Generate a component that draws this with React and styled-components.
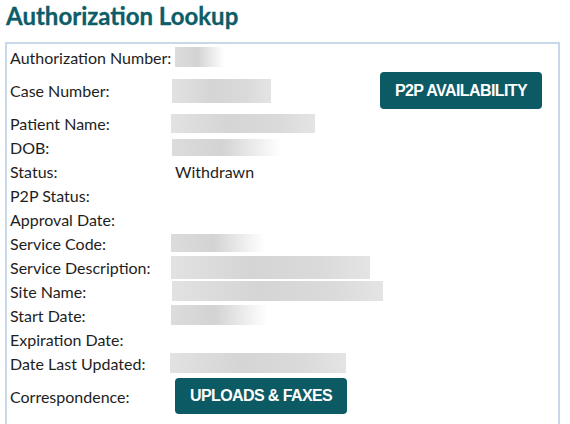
import React from "react";
import styled, { createGlobalStyle } from "styled-components";

const GlobalStyle = createGlobalStyle`
  body {
    margin: 0;
    background: #ffffff;
    font-family: Lato, "Open Sans", sans-serif;
  }
`;

const Page = styled.div`
  padding: 0 10px 0 5px;
`;

const Title = styled.h2`
  margin: 0;
  padding: 1px 0 0 1px;
  height: 41px;
  line-height: 30px;
  font-size: 24px;
  font-weight: 700;
  color: #0d5d68;
  -webkit-text-stroke: 0.3px #0d5d68;
`;

const Panel = styled.div`
  border: 2px solid #c9d8e9;
  padding: 1px 16px 30px 3px;
`;

const Row = styled.div`
  display: grid;
  grid-template-columns: 165px 1fr auto;
  align-items: center;
  min-height: 24px;
  padding: ${(p) => (p.$tall ? "3px 0 2px" : "0")};
`;

const Label = styled.span`
  font-size: 16px;
  color: #1e1e1e;
`;

const Value = styled.span`
  font-size: 16px;
  color: #1e1e1e;
`;

const Blur = styled.div`
  width: ${(p) => p.$w}px;
  height: ${(p) => p.$h || 20}px;
  margin-left: ${(p) => p.$dx || 0}px;
  background: ${(p) =>
    p.$fade
      ? "linear-gradient(90deg, #dcdcdc 0%, #d3d3d3 45%, #f4f4f4 85%, #ffffff 100%)"
      : "linear-gradient(90deg, #e2e2e2 0%, #d5d5d5 40%, #dadada 75%, #e4e4e4 100%)"};
`;

const Button = styled.button`
  height: ${(p) => p.$h || 36}px;
  padding: 0 15px;
  border: none;
  border-radius: 4px;
  background: #0c5a64;
  color: #ffffff;
  font-family: "Liberation Sans", Arial, sans-serif;
  font-size: 16px;
  font-weight: 700;
  letter-spacing: -0.6px;
  text-transform: uppercase;
  justify-self: ${(p) => (p.$end ? "end" : "start")};
`;

const rows = [
  { label: "Authorization Number:", blur: { w: 50, fade: true } },
  { label: "Case Number:", blur: { w: 99, h: 24, dx: -3 }, p2p: true },
  { label: "Patient Name:", blur: { w: 144, h: 19, dx: -4 } },
  { label: "DOB:", blur: { w: 110, h: 17, dx: -3, fade: true } },
  { label: "Status:", text: "Withdrawn" },
  { label: "P2P Status:" },
  { label: "Approval Date:" },
  { label: "Service Code:", blur: { w: 94, h: 18, dx: -4, fade: true } },
  { label: "Service Description:", blur: { w: 199, h: 23, dx: -4 } },
  { label: "Site Name:", blur: { w: 211, h: 20, dx: -3 } },
  { label: "Start Date:", blur: { w: 97, h: 20, dx: -4, fade: true } },
  { label: "Expiration Date:" },
  { label: "Date Last Updated:", blur: { w: 176, h: 20, dx: -5 } },
];

export default function App() {
  return (
    <Page>
      <GlobalStyle />
      <Title>Authorization Lookup</Title>
      <Panel>
        {rows.map((r) => (
          <Row key={r.label} $tall={r.p2p}>
            <Label>{r.label}</Label>
            {r.blur ? (
              <Blur $w={r.blur.w} $h={r.blur.h} $dx={r.blur.dx} $fade={r.blur.fade} />
            ) : (
              <Value>{r.text || ""}</Value>
            )}
            {r.p2p ? (
              <Button $end $h={37}>
                P2P Availability
              </Button>
            ) : (
              <span />
            )}
          </Row>
        ))}
        <Row $tall>
          <Label>Correspondence:</Label>
          <Button>Uploads &amp; Faxes</Button>
          <span />
        </Row>
      </Panel>
    </Page>
  );
}
